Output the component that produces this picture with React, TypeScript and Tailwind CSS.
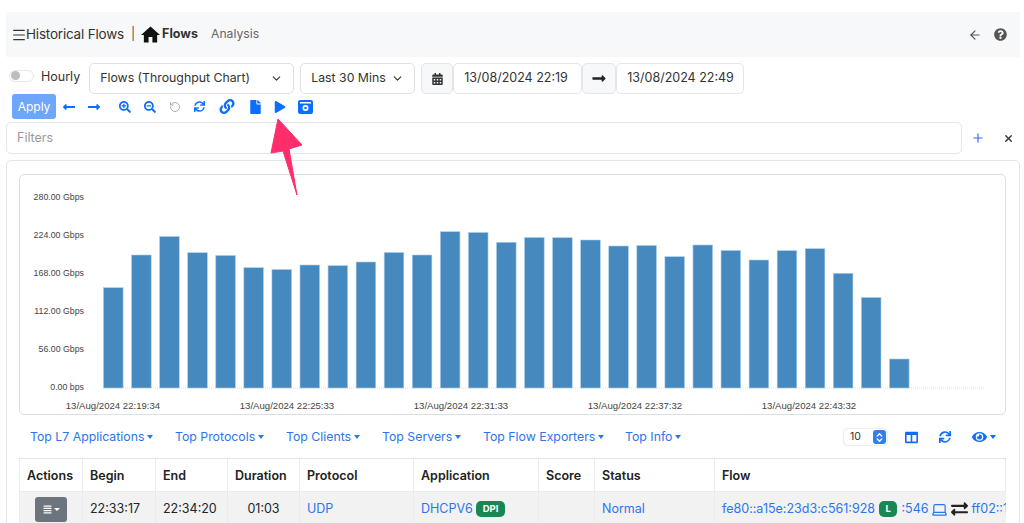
import { ArrowLeft, ChevronDown, ChevronsUpDown, Laptop, Menu, RotateCcw, X, Plus } from "lucide-react";
import {
  FaCalendarAlt,
  FaColumns,
  FaEye,
  FaFile,
  FaLink,
  FaLongArrowAltLeft,
  FaLongArrowAltRight,
  FaPlay,
  FaQuestionCircle,
  FaSearchMinus,
  FaSearchPlus,
  FaSync,
  FaExchangeAlt,
  FaAlignJustify,
} from "react-icons/fa";

const bars = [287.7, 255, 236.5, 252.7, 255.5, 267.7, 269.5, 265, 265.7, 262, 252.5, 255, 231.7, 232.5, 242.3, 237.5, 237.7, 240, 246, 245.5, 256.7, 245, 250.5, 260, 250.7, 248.7, 273.3, 297.5, 359];
const yLabels = ["280.00 Gbps", "224.00 Gbps", "168.00 Gbps", "112.00 Gbps", "56.00 Gbps", "0.00 bps"];
const xLabels = ["13/Aug/2024 22:19:34", "13/Aug/2024 22:25:33", "13/Aug/2024 22:31:33", "13/Aug/2024 22:37:32", "13/Aug/2024 22:43:32"];
const topMenus = [
  { label: "Top L7 Applications", width: "w-[145px]" },
  { label: "Top Protocols", width: "w-[111px]" },
  { label: "Top Clients", width: "w-[96px]" },
  { label: "Top Servers", width: "w-[101px]" },
  { label: "Top Flow Exporters", width: "w-[142px]" },
  { label: "Top Info", width: "w-[70px]" },
];

const Caret = () => <span className="ml-[3px] inline-block border-x-[3.5px] border-t-[4px] border-x-transparent border-t-current align-middle" />;

const Chart = () => (
  <svg width="985" height="238" viewBox="0 0 985 238" className="block">
    {yLabels.map((label, i) => (
      <text key={label} x="64" y={25 + i * 38} textAnchor="end" fontSize="8.8" fill="#444" fontFamily="Liberation Sans, sans-serif">
        {label}
      </text>
    ))}
    <line x1="83" y1="213" x2="964" y2="213" stroke="#ddd" strokeDasharray="1 1" />
    {bars.map((top, i) => (
      <rect key={i} x={83.5 + i * 28.07} y={top - 175} width="19.6" height={388 - top} fill="#4689bf" stroke="#a9cdea" strokeWidth="0.6" />
    ))}
    {xLabels.map((label, i) => (
      <text key={label} x={93 + i * 174} y="234" textAnchor="middle" fontSize="9.6" fill="#444" fontFamily="Liberation Sans, sans-serif">
        {label}
      </text>
    ))}
  </svg>
);

export default function App() {
  return (
    <div className="relative h-[523px] w-[1024px] overflow-hidden bg-white pl-[6px] pr-[4px] pt-[12px] font-['Inter',sans-serif] text-[12.5px] text-[#212529]">
      {/* navbar */}
      <div className="flex h-[45px] items-center justify-between bg-[#f7f8f9] pl-[5px] pr-[13px]">
        <div className="flex items-center">
          <Menu className="-mr-[1px] h-[16px] w-[16px] text-[#333]" strokeWidth={1.8} />
          <span className="text-[13.5px] tracking-[-0.2px] text-[#333]">Historical Flows</span>
          <span className="ml-[7px] text-[#555]">|</span>
          <svg viewBox="2 3 20 17" className="ml-[6px] h-[17px] w-[19px] text-[#111]" fill="currentColor">
            <path d="M10 20v-6h4v6h5v-8h3L12 3 2 12h3v8z" />
          </svg>
          <span className="ml-[2px] text-[12.5px] font-bold text-[#333]">Flows</span>
          <span className="ml-[13px] text-[12.2px] text-[#666]">Analysis</span>
        </div>
        <div className="flex items-center gap-[12px] text-[#555]">
          <ArrowLeft className="h-[14px] w-[14px]" />
          <FaQuestionCircle className="h-[13px] w-[13px]" />
        </div>
      </div>

      {/* range selectors */}
      <div className="mt-[6px] flex h-[31px] items-center pl-[3px] text-[12.3px] text-[#333]">
        <span className="relative mb-[6px] h-[12px] w-[25px] rounded-full border border-[#e8e8e8] bg-white">
          <span className="absolute left-[1px] top-[0.5px] h-[9px] w-[9px] rounded-full bg-[#bdbdbd]" />
        </span>
        <span className="ml-[7px] mb-[2px] text-[12.5px]">Hourly</span>
        <div className="ml-[9px] flex h-[31px] w-[205px] items-center justify-between rounded-[5px] border border-[#dee2e6] pl-[10px] pr-[10px]">
          Flows (Throughput Chart) <ChevronDown className="h-[13px] w-[13px]" />
        </div>
        <div className="ml-[6px] flex h-[31px] w-[115px] items-center justify-between rounded-[5px] border border-[#dee2e6] pl-[10px] pr-[10px]">
          Last 30 Mins <ChevronDown className="h-[13px] w-[13px]" />
        </div>
        <div className="ml-[6px] flex h-[31px] w-[32px] items-center justify-center rounded-[5px] border border-[#e3e5e8] bg-[#f7f8f9]">
          <FaCalendarAlt className="h-[12px] w-[11px] text-[#333]" />
        </div>
        <div className="flex h-[31px] w-[129px] items-center rounded-[5px] border border-[#e3e5e8] pl-[10px] text-[12.5px]">13/08/2024 22:19</div>
        <div className="flex h-[31px] w-[34px] items-center justify-center rounded-[5px] border border-[#e3e5e8] bg-[#f7f8f9]">
          <FaLongArrowAltRight className="h-[15px] w-[14px] text-[#222]" />
        </div>
        <div className="flex h-[31px] w-[128px] items-center rounded-[5px] border border-[#e3e5e8] pl-[10px] text-[12.5px]">13/08/2024 22:49</div>
      </div>

      {/* toolbar */}
      <div className="flex h-[25px] items-center pl-[6px] text-[#0d6efd]">
        <button className="h-[25px] w-[44px] rounded-[3px] bg-[#6ea6fb] text-[12px] text-white">Apply</button>
        <FaLongArrowAltLeft className="ml-[7px] h-[14px] w-[12px]" />
        <FaLongArrowAltRight className="ml-[13px] h-[14px] w-[12px]" />
        <FaSearchPlus className="ml-[19px] h-[12px] w-[12px]" />
        <FaSearchMinus className="ml-[13px] h-[12px] w-[12px]" />
        <RotateCcw className="ml-[13px] h-[12px] w-[12px] text-[#aaa]" />
        <FaSync className="ml-[13px] h-[11px] w-[11px]" />
        <FaLink className="ml-[14px] h-[15px] w-[16px]" />
        <FaFile className="ml-[15px] h-[14px] w-[11px]" />
        <FaPlay className="ml-[13px] h-[12px] w-[12px]" />
        <svg viewBox="0 0 15 14" className="ml-[12px] h-[14px] w-[15px]" fill="currentColor">
          <path fillRule="evenodd" d="M2 0h11a2 2 0 0 1 2 2v10a2 2 0 0 1-2 2H2a2 2 0 0 1-2-2V2a2 2 0 0 1 2-2zM2 2v1.5h11V2zM7.5 5a3 3 0 1 0 0 6 3 3 0 0 0 0-6zM7.5 6.7a1.3 1.3 0 1 1 0 2.6 1.3 1.3 0 0 1 0-2.6z" />
        </svg>
      </div>

      {/* filters */}
      <div className="mt-[3px] flex h-[32px] items-center">
        <div className="flex h-[32px] w-[956px] items-center rounded-[5px] border border-[#e3e5e8] pl-[10px] text-[#999]">Filters</div>
        <Plus className="ml-[9px] h-[14px] w-[14px] text-[#2f6ff0]" />
        <X className="ml-[18px] h-[11px] w-[11px] text-[#333]" strokeWidth={3} />
      </div>

      {/* main card */}
      <div className="mt-[6px] h-[400px] rounded-[5px] border border-[#e3e5e8] pl-[12px] pr-[13px] pt-[13px]">
        <div className="h-[241px] rounded-[5px] border border-[#dcdfe2]">
          <Chart />
        </div>

        <div className="mt-[10px] flex h-[24px] items-center pl-[11px] text-[12.3px] text-[#2a75f0]">
          {topMenus.map((m) => (
            <span key={m.label} className={m.width}>
              {m.label}
              <Caret />
            </span>
          ))}
          <div className="ml-[149px] flex h-[16px] w-[43px] items-center justify-between rounded-[4px] pl-[6px] pr-[1px] text-[10.5px] text-[#333] shadow-[0_0_2px_rgba(0,0,0,0.25)]">
            10
            <span className="flex h-[14px] w-[13px] items-center justify-center rounded-[3px] bg-[#2f80ed] text-white">
              <ChevronsUpDown className="h-[11px] w-[11px]" strokeWidth={3} />
            </span>
          </div>
          <FaColumns className="ml-[18px] h-[13px] w-[13px] text-[#0d6efd]" />
          <FaSync className="ml-[21px] h-[12px] w-[12px] text-[#0d6efd]" />
          <FaEye className="ml-[21px] h-[14px] w-[15px] text-[#0d6efd]" />
          <span className="text-[#0d6efd]">
            <Caret />
          </span>
        </div>

        {/* table */}
        <div className="mt-[9px] grid grid-cols-[64px_73px_72px_72px_114px_125px_56px_120px_291px] border-t border-[#e3e5e8]">
          {["Actions", "Begin", "End", "Duration", "Protocol", "Application", "Score", "Status", "Flow"].map((h) => (
            <div key={h} className="flex h-[33px] items-center border-b border-r border-[#e9ebed] pl-[7px] pt-[2px] font-semibold text-[#222] first:border-l last:border-r-0">
              {h}
            </div>
          ))}
          <div className="flex h-[34px] items-center justify-center border-l border-r border-[#e9ebed] bg-[#f2f2f2]">
            <span className="flex h-[25px] w-[32px] items-center justify-center rounded-[3px] bg-[#6c757d] text-white">
              <FaAlignJustify className="h-[9px] w-[9px]" />
              <span className="ml-[2px] border-x-[3px] border-t-[3px] border-x-transparent border-t-current" />
            </span>
          </div>
          <div className="flex h-[34px] items-center border-r border-[#e9ebed] bg-[#f2f2f2] pl-[7px]">22:33:17</div>
          <div className="flex h-[34px] items-center border-r border-[#e9ebed] bg-[#f2f2f2] pl-[7px]">22:34:20</div>
          <div className="flex h-[34px] items-center justify-center border-r border-[#e9ebed] bg-[#f2f2f2]">01:03</div>
          <div className="flex h-[34px] items-center border-r border-[#e9ebed] bg-[#f2f2f2] pl-[7px] text-[#2a75f0]">UDP</div>
          <div className="flex h-[34px] items-center border-r border-[#e9ebed] bg-[#f2f2f2] pl-[7px] text-[#2a75f0]">
            DHCPV6
            <span className="ml-[3px] rounded-[5px] bg-[#198754] px-[7px] py-[1px] text-[9.5px] font-bold leading-[14px] text-white">DPI</span>
          </div>
          <div className="h-[34px] border-r border-[#e9ebed] bg-[#f2f2f2]" />
          <div className="flex h-[34px] items-center border-r border-[#e9ebed] bg-[#f2f2f2] pl-[7px] text-[#2a75f0]">Normal</div>
          <div className="flex h-[34px] items-center overflow-hidden whitespace-nowrap bg-[#f2f2f2] pl-[7px] text-[#2a75f0]">
            fe80::a15e:23d3:c561:928
            <span className="ml-[4px] rounded-[5px] bg-[#198754] px-[6.5px] py-[1px] text-[9.5px] font-bold leading-[14px] text-white">L</span>
            <span className="ml-[4px]">:546</span>
            <Laptop className="ml-[3px] h-[17px] w-[17px] shrink-0" strokeWidth={1.7} />
            <FaExchangeAlt className="ml-[3px] h-[18px] w-[17px] shrink-0 text-[#222]" />
            <span className="ml-[3px]">ff02::1</span>
          </div>
        </div>
      </div>

      {/* annotation arrow */}
      <svg viewBox="0 0 40 80" className="absolute left-[268px] top-[118px] h-[80px] w-[40px]">
        <path d="M10 1 L34 27 L21 31 L29 77 L15 33 L3 35 Z" fill="#ff2d6b" stroke="#ff2d6b" strokeWidth="1" strokeLinejoin="round" />
      </svg>
    </div>
  );
}
